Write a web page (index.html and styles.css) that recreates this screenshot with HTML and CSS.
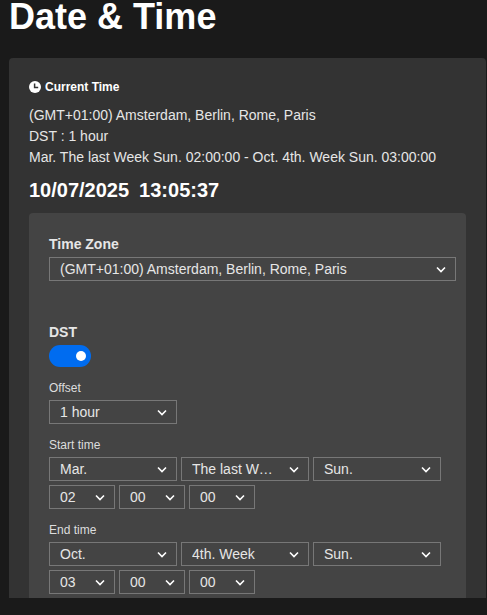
FILE: index.html
```html
<!DOCTYPE html>
<html>
<head>
	<title>Date &amp; Time</title>
	<link rel="stylesheet" href="styles.css">
</head>
<body>
	<div class="page">
		<h1 class="page-title">Date &amp; Time</h1>

		<div class="panel">
			<div class="panel-title">
				<svg class="clock" viewBox="0 0 12 12" width="12" height="12">
					<circle cx="6" cy="6" r="6" fill="#fff"/>
					<path d="M5.6 2.4V6.6H9.2" fill="none" stroke="#333" stroke-width="1.5"/>
				</svg>
				Current Time
			</div>
			<div class="info">
				<div>(GMT+01:00) Amsterdam, Berlin, Rome, Paris</div>
				<div>DST : 1 hour</div>
				<div>Mar. The last Week Sun. 02:00:00 - Oct. 4th. Week Sun. 03:00:00</div>
			</div>
			<div class="clock-now">
				<span>10/07/2025</span>
				<span>13:05:37</span>
			</div>

			<div class="card">
				<div class="field-title">Time Zone</div>
				<select class="select zone">
					<option>(GMT+01:00) Amsterdam, Berlin, Rome, Paris</option>
				</select>

				<div class="field-title dst-title">DST</div>
				<div class="toggle"><div class="knob"></div></div>

				<div class="label offset-label">Offset</div>
				<select class="select">
					<option>1 hour</option>
				</select>

				<div class="label time-label">Start time</div>
				<div class="row">
					<select class="select"><option>Mar.</option></select>
					<select class="select"><option>The last Week</option></select>
					<select class="select"><option>Sun.</option></select>
				</div>
				<div class="row">
					<select class="select small"><option>02</option></select>
					<select class="select small"><option>00</option></select>
					<select class="select small"><option>00</option></select>
				</div>

				<div class="label time-label">End time</div>
				<div class="row">
					<select class="select"><option>Oct.</option></select>
					<select class="select"><option>4th. Week</option></select>
					<select class="select"><option>Sun.</option></select>
				</div>
				<div class="row">
					<select class="select small"><option>03</option></select>
					<select class="select small"><option>00</option></select>
					<select class="select small"><option>00</option></select>
				</div>
			</div>
		</div>
	</div>
</body>
</html>
```

FILE: styles.css
```css
html, body {
	margin: 0;
	height: 100%;
	overflow: hidden;
}

body {
	background-color: #1a1a1a;
	color: #e6e6e6;
	font-family: "Liberation Sans", Arial, sans-serif;
	font-size: 14px;
}

.page {
	height: 598px;
	padding: 0 1px 0 9px;
	overflow: hidden;
}

.page-title {
	margin: -4px 0 20px;
	height: 42px;
	color: #fff;
	font-size: 36px;
	line-height: 42px;
	font-weight: bold;
}

.panel {
	padding: 20px 20px 0;
	background-color: #333;
	border-radius: 4px 4px 0 0;
}

.panel-title {
	display: flex;
	align-items: center;
	gap: 4px;
	height: 18px;
	color: #fff;
	font-size: 12px;
	font-weight: bold;
}

.info {
	margin-top: 9px;
	line-height: 21px;
}

.clock-now {
	display: flex;
	gap: 10px;
	margin-top: 10px;
	color: #fff;
	font-size: 20px;
	line-height: 24px;
	font-weight: bold;
}

.card {
	margin-top: 11px;
	padding: 20px 10px 40px 20px;
	background-color: #444;
	border-radius: 4px 4px 0 0;
}

.field-title {
	font-weight: bold;
	line-height: 22px;
}

.select {
	display: block;
	width: 128px;
	height: 24px;
	padding: 0 32px 0 10px;
	color: #e6e6e6;
	font-family: inherit;
	font-size: 14px;
	background-color: transparent;
	background-image: url("data:image/svg+xml,%3Csvg xmlns='http://www.w3.org/2000/svg' width='10' height='7'%3E%3Cpath d='M1 1.5l4 4 4-4' fill='none' stroke='%23fff' stroke-width='1.6'/%3E%3C/svg%3E");
	background-repeat: no-repeat;
	background-position: right 9px center;
	border: 1px solid #777;
	border-radius: 0;
	box-sizing: border-box;
	appearance: none;
	text-overflow: ellipsis;
}

.zone {
	width: 407px;
	margin-top: 2px;
}

.small {
	width: 66px;
	padding-right: 20px;
}

.dst-title {
	margin-top: 40px;
}

.toggle {
	display: flex;
	align-items: center;
	justify-content: flex-end;
	width: 42px;
	height: 22px;
	margin-top: 2px;
	padding-right: 5px;
	background-color: #006cf0;
	border-radius: 11px;
	box-sizing: border-box;
}

.knob {
	width: 10px;
	height: 10px;
	background-color: #fff;
	border-radius: 50%;
}

.label {
	font-size: 12px;
	line-height: 14px;
	color: #ddd;
}

.offset-label {
	margin: 14px 0 5px;
}

.time-label {
	margin: 14px 0 5px;
}

.row {
	display: flex;
	gap: 4px;
	margin-bottom: 4px;
}
```
